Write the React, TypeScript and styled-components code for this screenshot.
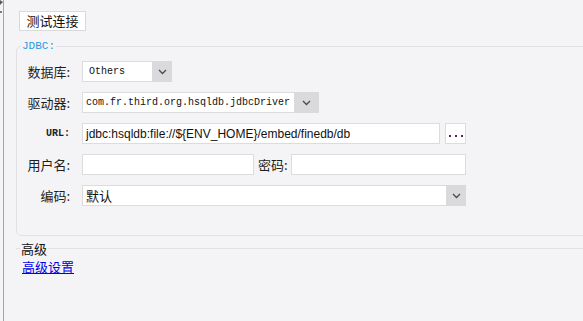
import React from "react";
import styled, { createGlobalStyle } from "styled-components";

const GlobalStyle = createGlobalStyle`
  html, body {
    margin: 0;
    padding: 0;
    background: #f4f4f6;
  }
  body {
    font-family: "Noto Sans CJK SC", "Liberation Sans", sans-serif;
    font-size: 13px;
    color: #1e1e1e;
  }
`;

const Shell = styled.div`
  display: flex;
  height: 321px;
  overflow: hidden;
`;

const Rail = styled.div`
  position: relative;
  flex: none;
  width: 3px;
  border-right: 1px solid #a6a6a6;
`;

const RailMark = styled.svg`
  position: absolute;
  top: 0;
  left: 0;
`;

const Content = styled.div`
  flex: 1;
  min-width: 0;
  padding: 11px 0 0 12px;
  overflow: hidden;
`;

const TestButton = styled.button`
  display: block;
  margin-left: 3px;
  width: 67px;
  height: 20px;
  padding: 0;
  border: 1px solid #d9d9d9;
  background: #fff;
  font-family: "Noto Sans CJK SC", sans-serif;
  font-size: 13px;
  line-height: 18px;
  color: #111;
`;

const Group = styled.fieldset`
  margin: 9px -10px 0 0;
  padding: 8px 0 29px 0;
  border: 1px solid #e1e1e4;
  border-radius: 5px;
  min-width: 0;
`;

const GroupLegend = styled.legend`
  margin-left: 4px;
  padding: 0 1px;
  font-family: "Liberation Mono", monospace;
  font-size: 11px;
  line-height: 13px;
  color: #2a9ae0;
`;

const Form = styled.div`
  display: grid;
  grid-template-columns: 45px 384px;
  grid-auto-rows: 21px;
  column-gap: 12px;
  row-gap: 10px;
  align-items: center;
  padding-left: 8px;
`;

const Label = styled.div<{ $mono?: boolean }>`
  text-align: right;
  white-space: nowrap;
  font-family: ${(p) =>
    p.$mono ? '"Liberation Mono", monospace' : '"Noto Sans CJK SC", sans-serif'};
  font-size: ${(p) => (p.$mono ? "10px" : "13px")};
  font-weight: ${(p) => (p.$mono ? 700 : 400)};
  color: #1e1e1e;
`;

const Line = styled.div`
  display: flex;
  align-items: center;
  height: 21px;
`;

const Select = styled.div<{ $width?: number }>`
  display: flex;
  box-sizing: border-box;
  width: ${(p) => (p.$width ? `${p.$width}px` : "100%")};
  height: 21px;
  border: 1px solid #dcdcdc;
  background: #fff;
`;

const SelectValue = styled.div<{ $mono?: boolean; $pad: number }>`
  flex: 1;
  display: flex;
  align-items: center;
  padding-left: ${(p) => p.$pad}px;
  white-space: nowrap;
  overflow: hidden;
  font-family: ${(p) =>
    p.$mono ? '"Liberation Mono", monospace' : '"Noto Sans CJK SC", sans-serif'};
  font-size: ${(p) => (p.$mono ? "10px" : "13px")};
  color: #111;
`;

const SelectArrow = styled.div<{ $width: number }>`
  flex: none;
  width: ${(p) => p.$width}px;
  margin: -1px -1px -1px 0;
  background: #dadadd;
  display: flex;
  align-items: center;
  justify-content: center;
`;

const TextInput = styled.div<{ $width?: number }>`
  box-sizing: border-box;
  flex: ${(p) => (p.$width ? "none" : "1")};
  width: ${(p) => (p.$width ? `${p.$width}px` : "auto")};
  height: 21px;
  padding-left: 3px;
  border: 1px solid #dcdcdc;
  background: #fff;
  display: flex;
  align-items: center;
  white-space: nowrap;
  overflow: hidden;
  font-family: "Liberation Sans", sans-serif;
  font-size: 12px;
  color: #111;
`;

const DotsButton = styled.div`
  box-sizing: border-box;
  flex: none;
  width: 21px;
  height: 21px;
  margin-left: 5px;
  border: 1px solid #dcdcdc;
  background: #fff;
  display: flex;
  align-items: center;
  justify-content: center;
  gap: 4px;
  padding-top: 4px;
`;

const Dot = styled.span`
  width: 2px;
  height: 2px;
  background: #4a2c55;
`;

const InlineLabel = styled.span`
  margin: 0 3px 0 4px;
  font-size: 13px;
  white-space: nowrap;
`;

const Advanced = styled.fieldset`
  margin: 5px -10px 0 0;
  padding: 0;
  border: none;
  border-top: 1px solid #e1e1e4;
  min-width: 0;
`;

const AdvancedLegend = styled.legend`
  margin-left: 4px;
  padding: 0 1px;
  font-size: 13px;
  line-height: 15px;
  color: #111;
`;

const AdvancedLink = styled.a`
  display: inline-block;
  margin: 3px 0 0 6px;
  font-size: 13px;
  line-height: 15px;
  color: #0000ee;
  text-decoration: underline;
`;

function Chevron() {
  return (
    <svg width="9" height="6" viewBox="0 0 9 6">
      <polyline points="1,1 4.5,4.5 8,1" fill="none" stroke="#4a4a4a" strokeWidth="1.3" />
    </svg>
  );
}

function Dropdown({
  value,
  width,
  arrow,
  mono,
  pad,
}: {
  value: string;
  width?: number;
  arrow: number;
  mono?: boolean;
  pad: number;
}) {
  return (
    <Select $width={width}>
      <SelectValue $mono={mono} $pad={pad}>
        {value}
      </SelectValue>
      <SelectArrow $width={arrow}>
        <Chevron />
      </SelectArrow>
    </Select>
  );
}

export default function App() {
  return (
    <>
      <GlobalStyle />
      <Shell>
        <Rail>
          <RailMark width="4" height="14" viewBox="0 0 4 14">
            <polygon points="0,0 3,2 0,5" fill="#5a5a5a" />
            <rect x="0" y="11" width="2" height="2" fill="#7a7a7a" />
          </RailMark>
        </Rail>
        <Content>
          <TestButton>测试连接</TestButton>
          <Group>
            <GroupLegend>JDBC:</GroupLegend>
            <Form>
              <Label>数据库:</Label>
              <Line>
                <Dropdown value="Others" width={90} arrow={20} mono pad={6} />
              </Line>

              <Label>驱动器:</Label>
              <Line>
                <Dropdown
                  value="com.fr.third.org.hsqldb.jdbcDriver"
                  width={237}
                  arrow={25}
                  mono
                  pad={3}
                />
              </Line>

              <Label $mono>URL:</Label>
              <Line>
                <TextInput>jdbc:hsqldb:file://${"{"}ENV_HOME{"}"}/embed/finedb/db</TextInput>
                <DotsButton>
                  <Dot />
                  <Dot />
                  <Dot />
                </DotsButton>
              </Line>

              <Label>用户名:</Label>
              <Line>
                <TextInput $width={172} />
                <InlineLabel>密码:</InlineLabel>
                <TextInput />
              </Line>

              <Label>编码:</Label>
              <Line>
                <Dropdown value="默认" arrow={20} pad={3} />
              </Line>
            </Form>
          </Group>
          <Advanced>
            <AdvancedLegend>高级</AdvancedLegend>
            <AdvancedLink href="#">高级设置</AdvancedLink>
          </Advanced>
        </Content>
      </Shell>
    </>
  );
}
